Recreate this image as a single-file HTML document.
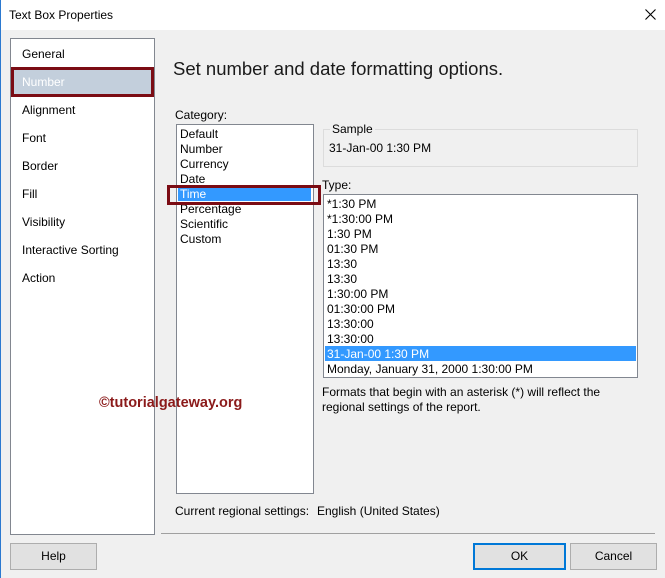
<!DOCTYPE html>
<html><head><style>
*{margin:0;padding:0;box-sizing:border-box}
body{width:665px;height:578px;background:#f0f0f0;font-family:"Liberation Sans",sans-serif;font-size:12px;color:#000;position:relative;overflow:hidden}
.a{position:absolute;white-space:nowrap}
.box{position:absolute;background:#fff;border:1px solid #828790}
.it{position:absolute;left:3px;line-height:15px;padding-top:1px}
.btn{position:absolute;background:#e1e1e1;border:1px solid #adadad;text-align:center;line-height:25px}
</style></head><body>
<div class="a" style="left:0;top:0;width:665px;height:30px;background:#fff"></div>
<div class="a" style="left:0;top:0;width:1px;height:578px;background:#2b79d0"></div>
<div class="a" style="left:9px;top:8px;font-size:12px">Text Box Properties</div>
<svg class="a" style="left:645px;top:9px" width="11" height="11"><path d="M0.5 0.5L10.5 10.5M10.5 0.5L0.5 10.5" stroke="#000" stroke-width="1.1"/></svg>

<div class="box" style="left:10px;top:38px;width:145px;height:497px"></div>
<div class="a" style="left:11px;top:67px;width:143px;height:30px;background:#c3cfdc;border:3px solid #7b0c14"></div>
<div class="a" style="left:22px;top:47px">General</div>
<div class="a" style="left:22px;top:75px;color:#fff">Number</div>
<div class="a" style="left:22px;top:103px">Alignment</div>
<div class="a" style="left:22px;top:131px">Font</div>
<div class="a" style="left:22px;top:159px">Border</div>
<div class="a" style="left:22px;top:187px">Fill</div>
<div class="a" style="left:22px;top:215px">Visibility</div>
<div class="a" style="left:22px;top:243px">Interactive Sorting</div>
<div class="a" style="left:22px;top:271px">Action</div>

<div class="a" style="left:173px;top:58px;font-size:18.5px;color:#1a1a1a">Set number and date formatting options.</div>
<div class="a" style="left:175px;top:108px">Category:</div>
<div class="box" style="left:176px;top:124px;width:138px;height:370px">
<div class="it" style="top:1px">Default</div>
<div class="it" style="top:16px">Number</div>
<div class="it" style="top:31px">Currency</div>
<div class="it" style="top:46px">Date</div>
<div style="position:absolute;left:1px;top:61px;width:133px;height:15px;background:#3399ff"></div>
<div class="it" style="top:61px;color:#fff">Time</div>
<div class="it" style="top:76px">Percentage</div>
<div class="it" style="top:91px">Scientific</div>
<div class="it" style="top:106px">Custom</div>
</div>
<div class="a" style="left:167px;top:185px;width:154px;height:20px;border:3px solid #7b0c14"></div>

<div class="a" style="left:323px;top:129px;width:315px;height:38px;border:1px solid #dcdcdc"></div>
<div class="a" style="left:330px;top:122px;background:#f0f0f0;padding:0 2px">Sample</div>
<div class="a" style="left:329px;top:141px">31-Jan-00 1:30 PM</div>
<div class="a" style="left:322px;top:178px">Type:</div>
<div class="box" style="left:323px;top:194px;width:315px;height:184px">
<div class="it" style="top:1px">*1:30 PM</div>
<div class="it" style="top:16px">*1:30:00 PM</div>
<div class="it" style="top:31px">1:30 PM</div>
<div class="it" style="top:46px">01:30 PM</div>
<div class="it" style="top:61px">13:30</div>
<div class="it" style="top:76px">13:30</div>
<div class="it" style="top:91px">1:30:00 PM</div>
<div class="it" style="top:106px">01:30:00 PM</div>
<div class="it" style="top:121px">13:30:00</div>
<div class="it" style="top:136px">13:30:00</div>
<div style="position:absolute;left:1px;top:151px;width:311px;height:15px;background:#3399ff"></div>
<div class="it" style="top:151px;color:#fff">31-Jan-00 1:30 PM</div>
<div class="it" style="top:166px">Monday, January 31, 2000 1:30:00 PM</div>
</div>
<div class="a" style="left:322px;top:385px;line-height:15px">Formats that begin with an asterisk (*) will reflect the<br>regional settings of the report.</div>
<div class="a" style="left:99px;top:395px;font-size:14.5px;font-weight:bold;color:#8b1a1a">©tutorialgateway.org</div>

<div class="a" style="left:175px;top:504px">Current regional settings:</div>
<div class="a" style="left:317px;top:504px">English (United States)</div>
<div class="a" style="left:161px;top:533px;width:494px;height:1px;background:#a0a0a0"></div>
<div class="btn" style="left:10px;top:543px;width:87px;height:27px">Help</div>
<div class="btn" style="left:473px;top:543px;width:93px;height:27px;border:2px solid #0078d7;line-height:23px">OK</div>
<div class="btn" style="left:570px;top:543px;width:87px;height:27px">Cancel</div>
</body></html>
